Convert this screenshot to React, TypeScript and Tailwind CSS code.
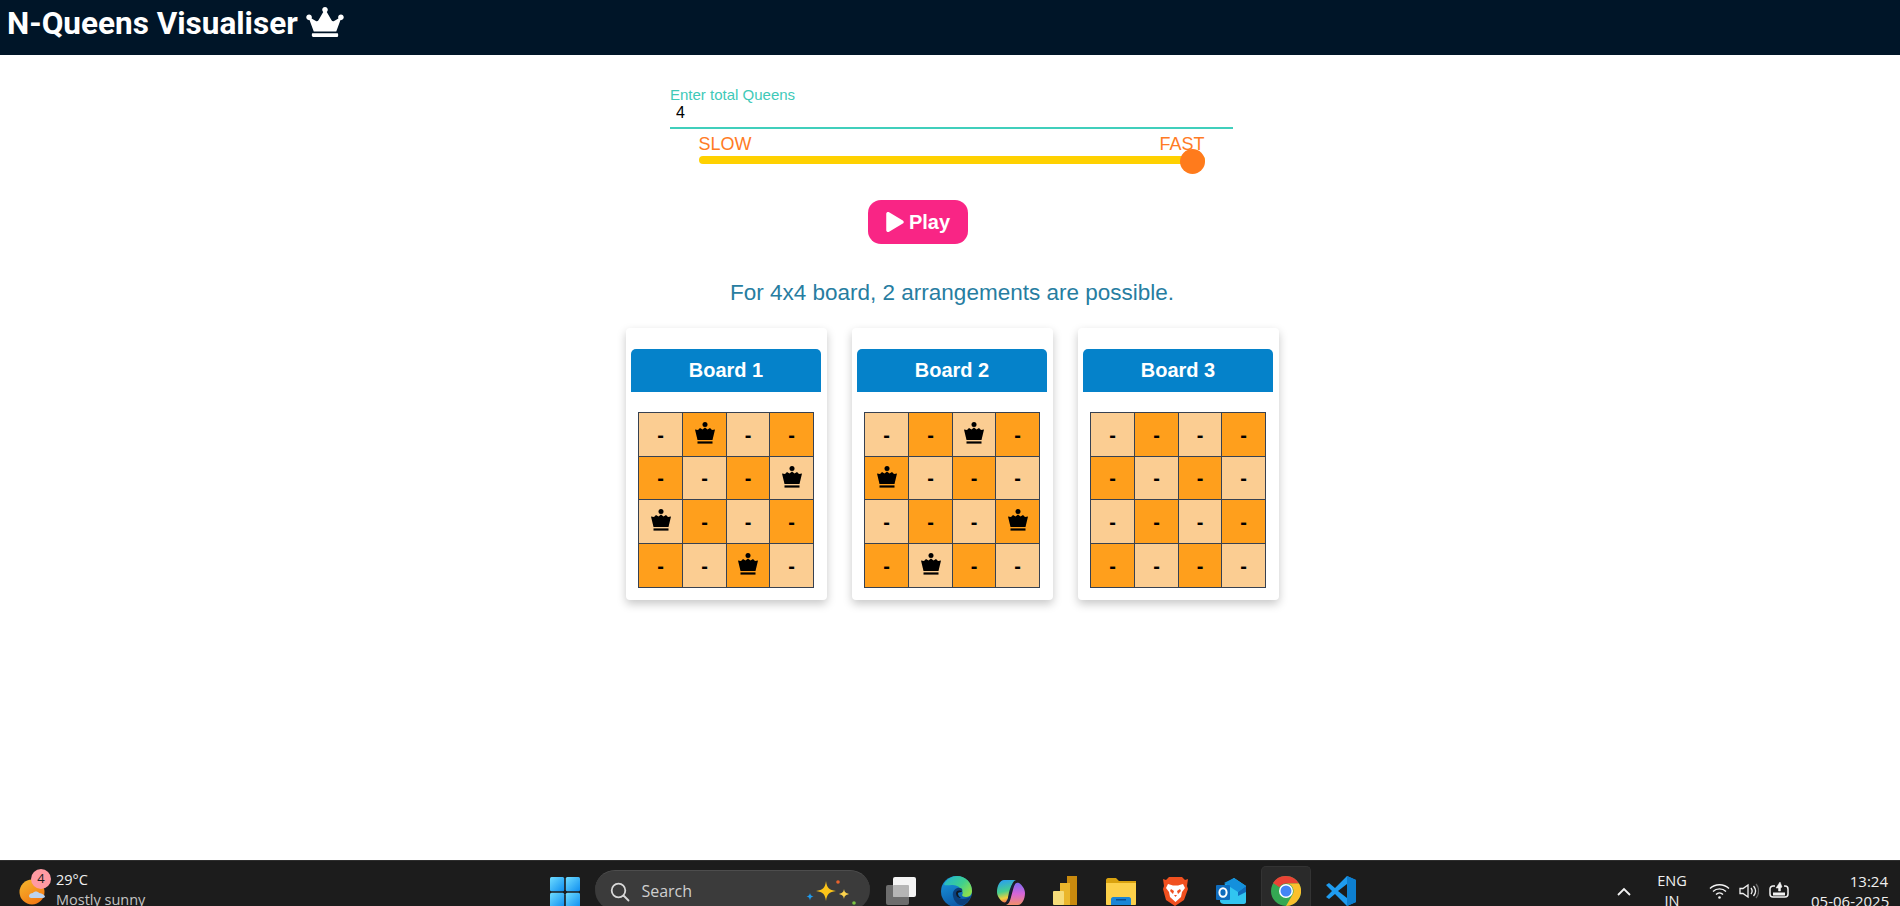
import { FaCrown, FaPlay } from 'react-icons/fa';

const BOARDS = [
  { title: 'Board 1', queens: [1, 3, 0, 2] },
  { title: 'Board 2', queens: [2, 0, 3, 1] },
  { title: 'Board 3', queens: [-1, -1, -1, -1] },
];

function Queen() {
  return (
    <svg width="20" height="22" viewBox="0 0 20 22" fill="#000000" className="mb-[3px]">
      <circle cx="10" cy="2.500" r="2.500" />
      <path d="M0 7.500 3 8 5 6 7.500 7.500 10 5.500 12.500 7.500 15 6 17 8 20 7.500 17.500 18H2.500Z" />
      <rect x="2.500" y="19.400" width="15" height="2.200" />
    </svg>
  );
}

function Board({ title, queens }: { title: string; queens: number[] }) {
  return (
    <div className="w-[201px] h-[272px] bg-white rounded-[4px] pt-[21px] px-[5px] shadow-[0_4px_10px_rgba(0,0,0,0.22)]">
      <div className="w-[190px] h-[43px] pb-[2px] bg-[#0582ca] rounded-t-[5px] flex items-center justify-center text-white text-[20px] font-bold">
        {title}
      </div>
      <div className="ml-[7px] mt-[20px] w-[176px] grid grid-cols-[44px_44px_43px_44px] grid-rows-[44px_43px_44px_44px] border-r border-b border-[#374151]">
        {queens.map((q, r) =>
          [0, 1, 2, 3].map((c) => (
            <div
              key={c}
              className={`border-l border-t border-[#374151] flex items-center justify-center text-black ${
                (r + c) % 2 === 0 ? 'bg-[#fbcd92]' : 'bg-[#ff9f1c]'
              }`}
            >
              {q === c ? <Queen /> : <span className="text-[20px] font-bold leading-none">-</span>}
            </div>
          ))
        )}
      </div>
    </div>
  );
}

function WeatherIcon() {
  return (
    <div className="relative w-[32px] h-[40px] mt-[8px]">
      <svg width="32" height="40" viewBox="0 0 32 40" className="absolute left-0 top-0">
        <defs>
          <linearGradient id="sun" x1="0" y1="0" x2="0.6" y2="1">
            <stop offset="0" stopColor="#f5b92e" />
            <stop offset="1" stopColor="#f47a14" />
          </linearGradient>
        </defs>
        <circle cx="13" cy="23" r="12.5" fill="url(#sun)" />
        <path d="M10 27c0-2 2-3 4-3 1-2 5-2 6 0 2 0 4 1 6 3 0 1-1 2-2 2H12c-1 0-2-1-2-2z" fill="#bcd3ee" />
      </svg>
      <span className="absolute left-[12px] top-0 w-[20px] h-[20px] rounded-full bg-[#ff9aa2] text-[#1c1c1c] text-[13px] flex items-center justify-center font-['Open_Sans',sans-serif]">
        4
      </span>
    </div>
  );
}

function WindowsIcon() {
  return (
    <svg width="30" height="30" viewBox="0 0 30 30" className="mt-[16px]">
      <defs>
        <linearGradient id="win" x1="0" y1="0" x2="1" y2="1">
          <stop offset="0" stopColor="#6fdcff" />
          <stop offset="1" stopColor="#0f8ff0" />
        </linearGradient>
      </defs>
      <rect x="0" y="0" width="14.200" height="14.200" rx="1.500" fill="url(#win)" />
      <rect x="15.800" y="0" width="14.200" height="14.200" rx="1.500" fill="url(#win)" />
      <rect x="0" y="15.800" width="14.200" height="14.200" rx="1.500" fill="url(#win)" />
      <rect x="15.800" y="15.800" width="14.200" height="14.200" rx="1.500" fill="url(#win)" />
    </svg>
  );
}

function SearchBox() {
  return (
    <div className="ml-[15px] mt-[9px] w-[275px] h-[40px] rounded-full bg-[#3b3b3b] border-t border-[#4d4d4d] flex items-start pl-[15px] pr-[12px]">
      <svg width="20" height="20" viewBox="0 0 20 20" className="mt-[11px]" fill="none" stroke="#d8d8d8" strokeWidth="1.800">
        <circle cx="8.500" cy="8.500" r="6.800" />
        <path d="M13.500 13.500l5 5" strokeLinecap="round" />
      </svg>
      <span className="ml-[11px] mt-[9px] text-[16px] leading-[22px] text-[#cfcfcf] font-['Open_Sans',sans-serif]">Search</span>
      <svg width="52" height="32" viewBox="0 0 52 32" className="ml-auto mt-[8px]">
        <path d="M20 2c1 7 3 9 10 10-7 1-9 3-10 10-1-7-3-9-10-10 7-1 9-3 10-10z" fill="#fcc419" />
        <path d="M38 10c.5 3 1.500 4 5 5-3.500 1-4.500 2-5 5-.5-3-1.500-4-5-5 3.500-1 4.500-2 5-5z" fill="#fcd34d" />
        <path d="M4 14c.4 2 1 3 3.500 3.500C5 18 4.400 19 4 21.500 3.600 19 3 18 .5 17.500 3 17 3.600 16 4 14z" fill="#1d9bf0" />
        <circle cx="32" cy="3" r="1.800" fill="#e8622c" />
        <circle cx="48" cy="24" r="1.800" fill="#7cc242" />
      </svg>
    </div>
  );
}

function TaskViewIcon() {
  return (
    <svg width="30" height="28" viewBox="0 0 30 28" className="ml-[16px] mt-[16px]">
      <rect x="0" y="8" width="23" height="20" rx="2" fill="#6d6d6d" />
      <rect x="7" y="0" width="23" height="20" rx="2" fill="#f4f4f4" />
      <rect x="7" y="8" width="16" height="12" rx="1" fill="#b5b5b5" />
    </svg>
  );
}

function EdgeIcon() {
  return (
    <svg width="31" height="31" viewBox="0 0 31 31" className="ml-[25px] mt-[15px]">
      <defs>
        <linearGradient id="edgeA" x1="0" y1="0" x2="1" y2="0.7">
          <stop offset="0" stopColor="#1fb4d8" />
          <stop offset="0.6" stopColor="#3fcf8e" />
          <stop offset="1" stopColor="#8ee04c" />
        </linearGradient>
        <linearGradient id="edgeB" x1="0" y1="0" x2="0.4" y2="1">
          <stop offset="0" stopColor="#1b9de2" />
          <stop offset="1" stopColor="#0c5aa8" />
        </linearGradient>
      </defs>
      <circle cx="15.500" cy="15.500" r="15.500" fill="url(#edgeB)" />
      <path d="M3 8C6 3 11 0 16 0c9 0 15 7 15 15 0 3-2 6-6 6-2 0-4-1-4-2 1-1 1-3 0-4-2-4-5-6-9-6-5 0-9 1-9-1z" fill="url(#edgeA)" />
      <path d="M12 20c-1-5 3-9 7-8 2 0 3 2 2 4-2-1-4-1-5 1-1 3 2 6 6 6 3 0 6-1 8-3-2 5-6 10-11 9-3-1-6-4-7-9z" fill="#0b3f7a" />
      <path d="M15 17c1-3 4-3 6-1-1 0-3 0-4 1 0 2 1 4 3 5-3 0-5-2-5-5z" fill="#101820" />
    </svg>
  );
}

function CopilotIcon() {
  return (
    <svg width="28" height="27" viewBox="0 0 28 27" className="ml-[25px] mt-[18px]">
      <defs>
        <linearGradient id="copA" x1="0.300" y1="0" x2="0.500" y2="1">
          <stop offset="0" stopColor="#2a9ff0" />
          <stop offset="0.500" stopColor="#46cf8e" />
          <stop offset="0.800" stopColor="#f3d03d" />
          <stop offset="1" stopColor="#ef6a5a" />
        </linearGradient>
        <linearGradient id="copB" x1="0.500" y1="0" x2="0.500" y2="1">
          <stop offset="0" stopColor="#7a6cf0" />
          <stop offset="0.500" stopColor="#d765d8" />
          <stop offset="1" stopColor="#f2906a" />
        </linearGradient>
      </defs>
      <path d="M7 1h12c-3 1-4 4-5 8l-3 11c-1 3-3 4-5 3-3-2-6-6-6-10C0 7 3 1 7 1z" fill="url(#copA)" />
      <path d="M21 26H9c3-1 4-4 5-8l3-11c1-3 3-4 5-3 3 2 6 6 6 10 0 6-3 12-7 12z" fill="url(#copB)" />
      <path d="M17 5c-2 2-3 5-4 9l-1 5c0 2-1 3-2 4" fill="none" stroke="#15223c" strokeWidth="2.200" />
    </svg>
  );
}

function PowerBiIcon() {
  return (
    <svg width="24" height="29" viewBox="0 0 24 29" className="ml-[28px] mt-[15px]">
      <rect x="14" y="0" width="10" height="29" fill="#c98a0e" />
      <rect x="7" y="7" width="10" height="22" fill="#eab62c" />
      <rect x="0" y="15" width="11" height="14" rx="1" fill="#f6dc7a" />
    </svg>
  );
}

function FolderIcon() {
  return (
    <svg width="30" height="27" viewBox="0 0 30 27" className="ml-[29px] mt-[17px]">
      <path d="M0 2c0-1 1-2 2-2h8l3 3h17v6H0z" fill="#d9a20f" />
      <path d="M0 5h30v21c0 .6-.4 1-1 1H1c-.6 0-1-.4-1-1z" fill="#fcd04a" />
      <path d="M5 27v-6c0-1 1-2 2-2h16c1 0 2 1 2 2v6z" fill="#1a86d6" />
      <rect x="10" y="21" width="10" height="1.500" fill="#0b4f8f" />
    </svg>
  );
}

function BraveIcon() {
  return (
    <svg width="25" height="29" viewBox="0 0 25 29" className="ml-[27px] mt-[16px]">
      <path d="M6 0h13l3 3 3-1-1 7 1 3-4 11-9 6-9-6L0 12l1-3-1-7 3 1z" fill="#f1501f" />
      <path d="M5 7l5 1.500h5L20 7l2 4-3 4-1 5-5.500 5L7 20l-1-5-3-4z" fill="#ffffff" />
      <path d="M8 12l3 2-1 3-3-3zM17 12l-3 2 1 3 3-3zM11 18h3l-1.500 2z" fill="#f1501f" />
    </svg>
  );
}

function OutlookIcon() {
  return (
    <svg width="30" height="26" viewBox="0 0 30 26" className="ml-[28px] mt-[17px]">
      <path d="M4 10 18 0l12 8v16c0 1-1 2-2 2H8c-2 0-4-1-4-3z" fill="#31c5f0" />
      <path d="M8 5l10-5 12 8-8 6z" fill="#1490dc" />
      <path d="M22 14l8-6v6l-8 4z" fill="#0f6cbd" />
      <rect x="0" y="7" width="14" height="15" rx="1" fill="#0f6cbd" />
      <ellipse cx="7" cy="14.500" rx="3.600" ry="4.300" fill="none" stroke="#ffffff" strokeWidth="2" />
    </svg>
  );
}

function ChromeTile() {
  return (
    <div className="ml-[15px] mt-[5px] w-[50px] h-[41px] rounded-t-[5px] bg-[#2a2a2a] border-t border-x border-[#333333] flex justify-center items-start pt-[9px]">
      <svg width="30" height="30" viewBox="0 0 30 30">
        <circle cx="15" cy="15" r="15" fill="#34a853" />
        <path d="M15 0a15 15 0 0 1 13 7.500H15a7.500 7.500 0 0 0-6.500 3.750L2 7A15 15 0 0 1 15 0z" fill="#ea4335" />
        <path d="M28 7.500A15 15 0 0 1 15 30l6.500-11.250A7.500 7.500 0 0 0 15 7.500z" fill="#fbc02d" />
        <circle cx="15" cy="15" r="7" fill="#ffffff" />
        <circle cx="15" cy="15" r="5.500" fill="#4285f4" />
      </svg>
    </div>
  );
}

function VsCodeIcon() {
  return (
    <svg width="30" height="30" viewBox="0 0 30 30" className="ml-[15px] mt-[15px]">
      <path d="M21 0l9 4v22l-9 4-12-12-6 5-3-2 6-6-6-6 3-2 6 5z" fill="#1f9cf0" />
      <path d="M21 8v14l-9-7z" fill="#1c1c1c" />
      <path d="M21 0l9 4v22l-9 4z" fill="#0d7fd0" />
    </svg>
  );
}

function Tray() {
  return (
    <div className="flex items-start">
      <svg width="14" height="9" viewBox="0 0 14 9" className="mt-[26px]" fill="none" stroke="#f2f2f2" strokeWidth="1.800">
        <path d="M1 8l6-6 6 6" />
      </svg>
      <div className="ml-[26px] w-[30px] mt-[10px] text-center text-[14.500px] leading-[20px] text-[#f0f0f0] font-['Open_Sans',sans-serif]">
        <div>ENG</div>
        <div>IN</div>
      </div>
      <svg width="21" height="16" viewBox="0 0 21 16" className="ml-[22px] mt-[22px]" fill="none" stroke="#f2f2f2" strokeWidth="1.400">
        <path d="M1 5.500c5-5 14-5 19 0M4 8.500c3.500-3.500 9.500-3.500 13 0M7 11.500c2-2 5-2 7 0" />
        <circle cx="10.500" cy="14.500" r="1.300" fill="#f2f2f2" stroke="none" />
      </svg>
      <svg width="20" height="16" viewBox="0 0 20 16" className="ml-[9px] mt-[22px]" fill="none" stroke="#f2f2f2" strokeWidth="1.300">
        <path d="M1 5.500h3L9 2v12L4 10.500H1z" />
        <path d="M12 5c1.500 2 1.500 4 0 6M14.500 3c2.500 3 2.500 7 0 10" />
        <path d="M17 1c3.500 4 3.500 10 0 14" stroke="#666666" />
      </svg>
      <svg width="20" height="18" viewBox="0 0 20 18" className="ml-[10px] mt-[20px]" fill="none" stroke="#f2f2f2" strokeWidth="1.500">
        <path d="M6 5H4a3 3 0 0 0-3 3v5a3 3 0 0 0 3 3h12a3 3 0 0 0 3-3V8a3 3 0 0 0-3-3h-1" />
        <path d="M11 1 7 7h2.500v3h2V7L13 6z" fill="#f2f2f2" strokeWidth="0.500" />
        <rect x="4" y="11.500" width="12" height="3" fill="#f2f2f2" stroke="none" />
      </svg>
      <div className="ml-[22px] w-[77px] mt-[10px] text-right text-[15px] leading-[20px] text-[#f0f0f0] font-['Open_Sans',sans-serif] whitespace-nowrap">
        <div>13:24</div>
        <div>05-06-2025</div>
      </div>
    </div>
  );
}

export default function App() {
  return (
    <div className="h-screen flex flex-col overflow-hidden bg-white font-['Liberation_Sans',Arial,sans-serif]">
      <header className="h-[55px] shrink-0 bg-[#001528] flex items-start pl-[7px] pt-[6px] text-white">
        <h1 className="text-[31.500px] leading-[36px] font-bold font-['Roboto',sans-serif]">N-Queens Visualiser</h1>
        <FaCrown className="ml-[8px] mt-[1px] w-[38px] h-[30px]" />
      </header>

      <main className="flex-1 flex flex-col items-center">
        <div className="w-[563px] mt-[32px] ml-[3px] border-b-2 border-[#40cfbc]">
          <div className="text-[15px] leading-[16px] text-[#40c9b8]">Enter total Queens</div>
          <input
            readOnly
            value="4"
            className="block w-full h-[24px] pl-[6px] pb-[5px] text-[16px] text-black outline-none"
          />
        </div>

        <div className="w-[506px] mt-[5px] ml-[3px]">
          <div className="flex justify-between text-[18px] leading-[20px] text-[#ff7b24]">
            <span>SLOW</span>
            <span>FAST</span>
          </div>
          <div className="relative h-[8px] mt-[2px] rounded-full bg-[#ffd100]">
            <span className="absolute right-0 top-[-7px] w-[25px] h-[25px] rounded-full bg-[#ff7b1c]" />
          </div>
        </div>

        <button className="mt-[36px] ml-[-64px] w-[100px] h-[44px] rounded-[13px] bg-[#f92585] text-white text-[20px] font-bold flex items-center justify-center gap-[5px]">
          <FaPlay className="w-[18px] h-[20px]" />
          Play
        </button>

        <p className="mt-[35px] ml-[4px] text-[22.500px] leading-[28px] text-[#277da1]">For 4x4 board, 2 arrangements are possible.</p>

        <div className="mt-[21px] flex gap-[25px] ml-[5px]">
          {BOARDS.map((b) => (
            <Board key={b.title} title={b.title} queens={b.queens} />
          ))}
        </div>
      </main>

      <footer className="h-[46px] shrink-0 overflow-hidden bg-[#1c1c1c] border-t border-[#2e2e2e] flex items-start justify-between pr-[12px] pl-[19px] -mt-px">
        <div className="flex items-start">
          <WeatherIcon />
          <div className="ml-[5px] mt-[9px] text-[14.500px] leading-[20px] font-['Open_Sans',sans-serif] whitespace-nowrap">
            <div className="text-[#f0f0f0]">29°C</div>
            <div className="text-[#c4c4c4]">Mostly sunny</div>
          </div>
          <div className="flex items-start ml-[405px]">
            <WindowsIcon />
            <SearchBox />
            <TaskViewIcon />
            <EdgeIcon />
            <CopilotIcon />
            <PowerBiIcon />
            <FolderIcon />
            <BraveIcon />
            <OutlookIcon />
            <ChromeTile />
            <VsCodeIcon />
          </div>
        </div>
        <Tray />
      </footer>
    </div>
  );
}
